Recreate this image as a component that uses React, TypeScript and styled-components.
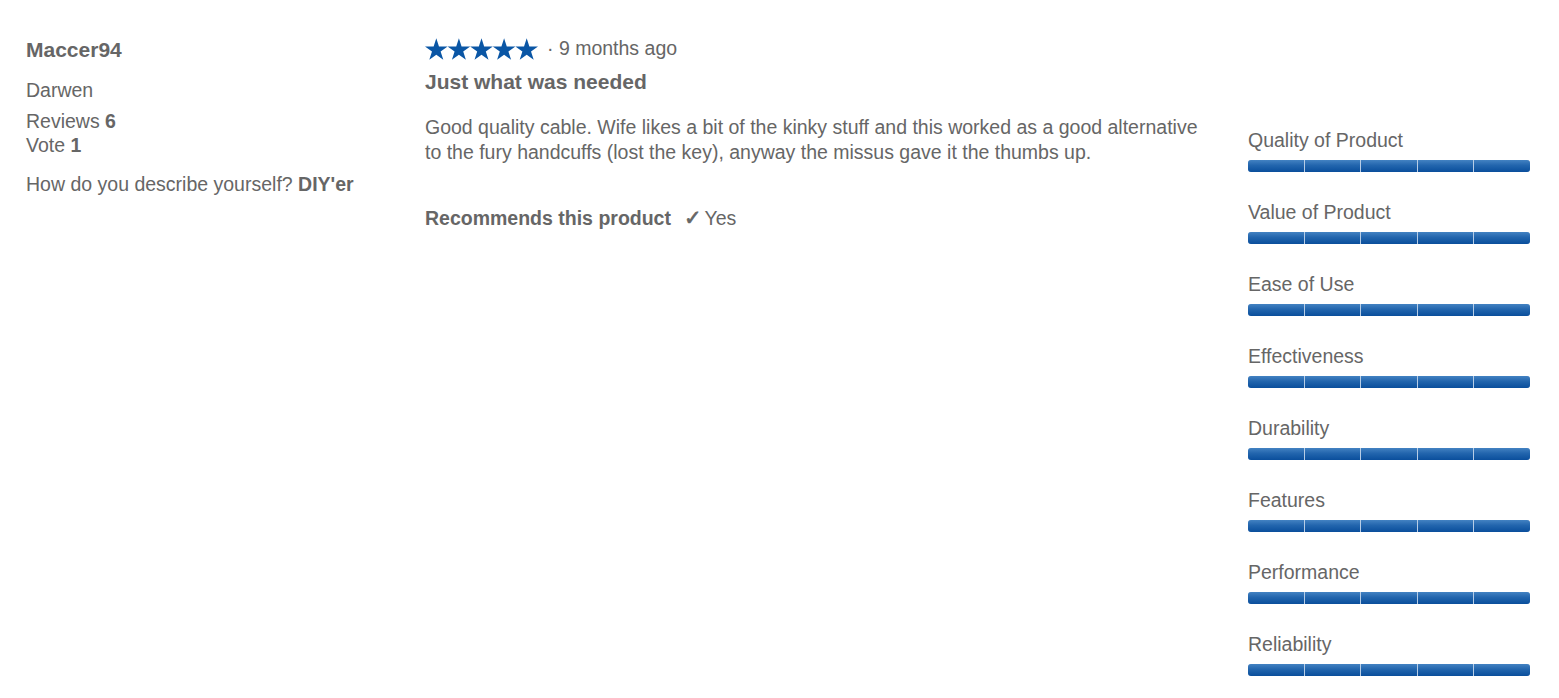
import React from "react";
import styled, { createGlobalStyle } from "styled-components";

const GlobalStyle = createGlobalStyle`
  html, body {
    margin: 0;
    padding: 0;
    background: #ffffff;
  }
  body {
    font-family: "Liberation Sans", Arial, sans-serif;
    color: #666666;
  }
`;

const Page = styled.div`
  display: grid;
  grid-template-columns: 399px minmax(0, 1fr) 282px;
  align-items: start;
  padding: 36px 29px 0 26px;
  width: 1559px;
  height: 698px;
  box-sizing: border-box;
  overflow: hidden;
`;

const Profile = styled.div`
  display: flex;
  flex-direction: column;
  padding-top: 2px;
`;

const UserName = styled.div`
  font-size: 21px;
  line-height: 24px;
  font-weight: bold;
  color: #666666;
`;

const Line = styled.div<{ $gap?: number }>`
  font-size: 19.5px;
  line-height: 24px;
  margin-top: ${(p) => p.$gap ?? 0}px;
`;

const Strong = styled.b`
  font-weight: bold;
`;

const Review = styled.div`
  display: flex;
  flex-direction: column;
  padding-right: 43px;
`;

const RatingRow = styled.div`
  display: flex;
  align-items: center;
  height: 24px;
`;

const Stars = styled.svg`
  display: block;
  width: 113px;
  height: 22px;
  margin-top: 1px;
  color: #0a56a5;
`;

const Age = styled.span`
  font-size: 19.5px;
  line-height: 24px;
  margin-left: 9px;
`;

const Title = styled.h3`
  margin: 10px 0 0;
  font-size: 21px;
  line-height: 24px;
  font-weight: bold;
  color: #666666;
`;

const Body = styled.p`
  margin: 20.5px 0 0;
  font-size: 19.5px;
  line-height: 25px;
`;

const Recommend = styled.div`
  margin-top: 41.5px;
  display: flex;
  align-items: center;
  font-size: 19.5px;
  line-height: 24px;
`;

const RecLabel = styled.span`
  font-weight: bold;
`;

const RecValue = styled.span`
  margin-left: 13px;
  display: inline-flex;
  align-items: center;
`;

const Check = styled.span`
  font-family: "DejaVu Sans", sans-serif;
  font-size: 21px;
  font-weight: bold;
  -webkit-text-stroke: 0.7px #666666;
  margin-right: 3px;
`;

const Ratings = styled.div`
  display: flex;
  flex-direction: column;
  padding-top: 92px;
`;

const RatingItem = styled.div`
  display: flex;
  flex-direction: column;
  margin-bottom: 28px;
`;

const RatingLabel = styled.div`
  font-size: 19.5px;
  line-height: 24px;
`;

const Bar = styled.div`
  margin-top: 8px;
  display: grid;
  grid-template-columns: repeat(5, 1fr);
  gap: 1px;
  height: 12px;
  background: #b7cde6;
  border-radius: 3px;
  overflow: hidden;
`;

const Segment = styled.div`
  background: linear-gradient(to bottom, #4382c2 0%, #2265ad 45%, #0a4e9c 100%);
`;

function starPoints(cx: number, cy: number, R: number): string {
  const r = R * 0.382;
  const pts: string[] = [];
  for (let i = 0; i < 10; i++) {
    const rad = i % 2 === 0 ? R : r;
    const a = (Math.PI / 5) * i - Math.PI / 2;
    pts.push(`${(cx + rad * Math.cos(a)).toFixed(2)},${(cy + rad * Math.sin(a)).toFixed(2)}`);
  }
  return pts.join(" ");
}

const StarRow: React.FC = () => (
  <Stars viewBox="0 0 113 22" aria-label="5 out of 5 stars">
    {[0, 1, 2, 3, 4].map((i) => (
      <polygon key={i} points={starPoints(11.3 + i * 22.6, 12.2, 11.9)} fill="currentColor" />
    ))}
  </Stars>
);

const ratings = [
  "Quality of Product",
  "Value of Product",
  "Ease of Use",
  "Effectiveness",
  "Durability",
  "Features",
  "Performance",
  "Reliability",
];

export default function App() {
  return (
    <>
      <GlobalStyle />
      <Page>
        <Profile>
          <UserName>Maccer94</UserName>
          <Line $gap={16}>Darwen</Line>
          <Line $gap={7}>
            Reviews <Strong>6</Strong>
          </Line>
          <Line>
            Vote <Strong>1</Strong>
          </Line>
          <Line $gap={15}>
            How do you describe yourself? <Strong>DIY'er</Strong>
          </Line>
        </Profile>
        <Review>
          <RatingRow>
            <StarRow />
            <Age>· 9 months ago</Age>
          </RatingRow>
          <Title>Just what was needed</Title>
          <Body>
            Good quality cable. Wife likes a bit of the kinky stuff and this worked as a good alternative to the
            fury handcuffs (lost the key), anyway the missus gave it the thumbs up.
          </Body>
          <Recommend>
            <RecLabel>Recommends this product</RecLabel>
            <RecValue>
              <Check>✓</Check>Yes
            </RecValue>
          </Recommend>
        </Review>
        <Ratings>
          {ratings.map((r) => (
            <RatingItem key={r}>
              <RatingLabel>{r}</RatingLabel>
              <Bar>
                {[0, 1, 2, 3, 4].map((i) => (
                  <Segment key={i} />
                ))}
              </Bar>
            </RatingItem>
          ))}
        </Ratings>
      </Page>
    </>
  );
}
